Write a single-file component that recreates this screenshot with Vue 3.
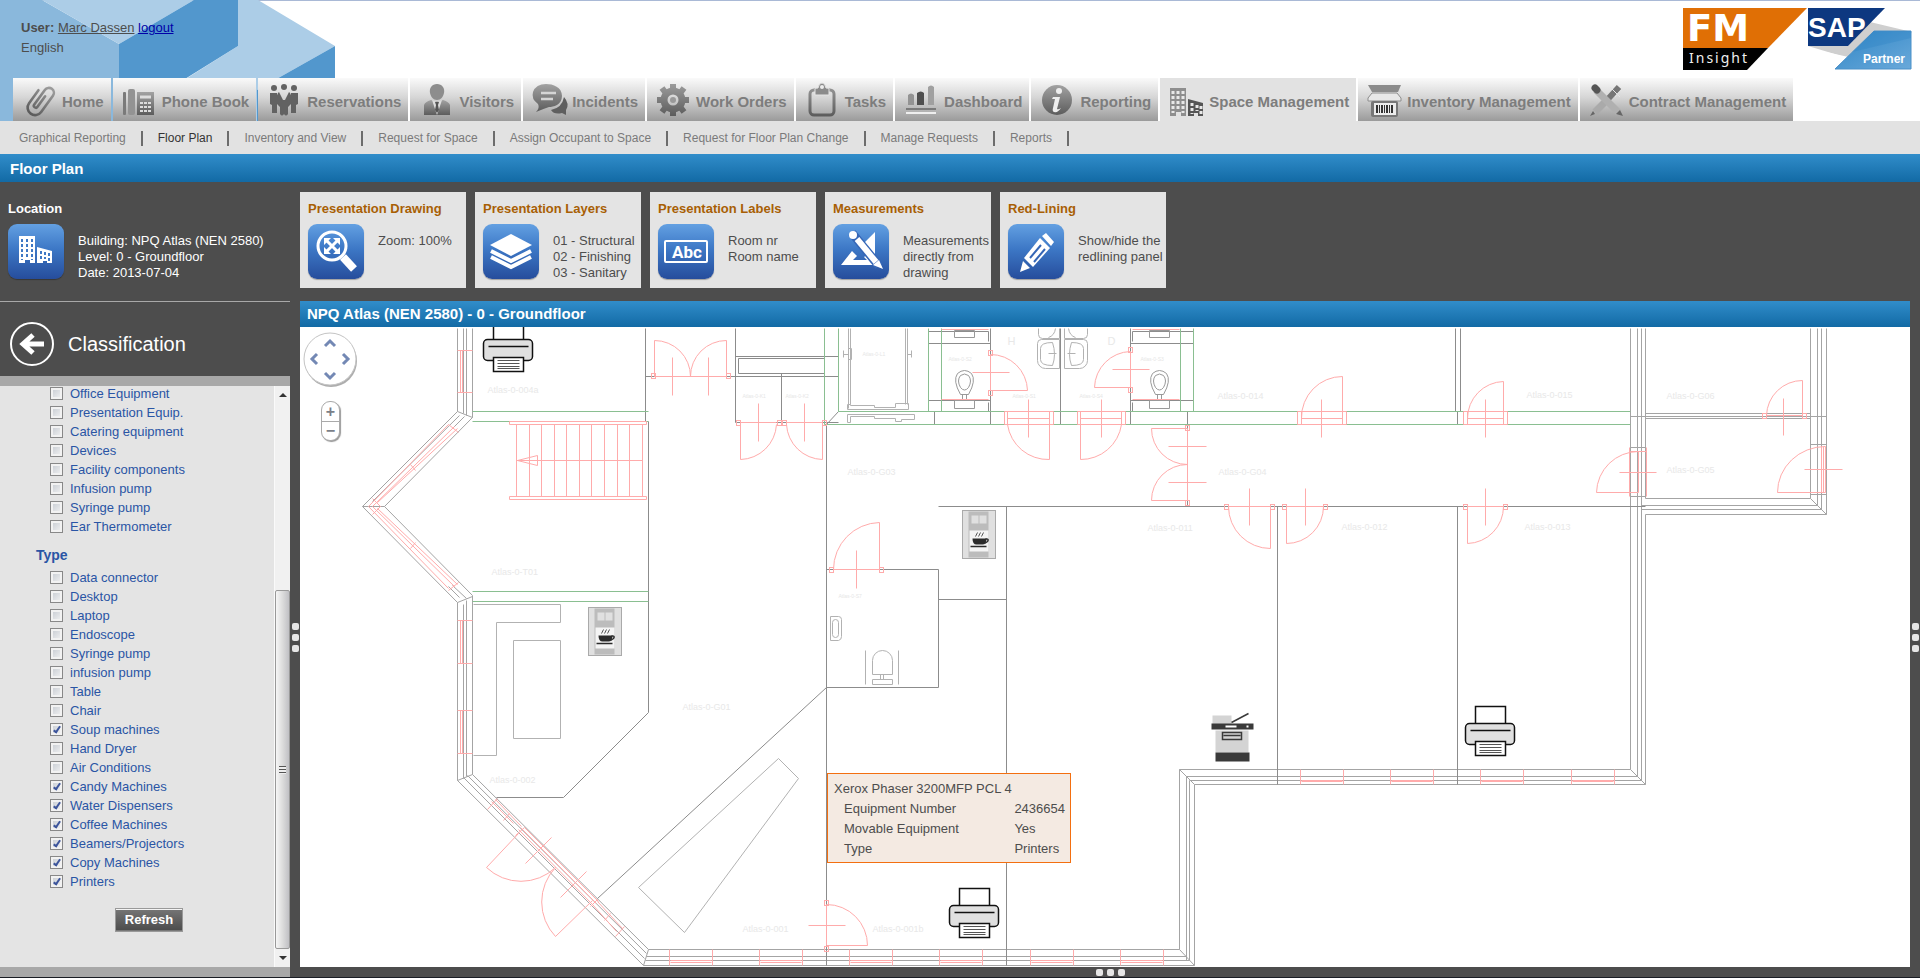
<script setup>
import { ref } from 'vue'

const tabs = [
  { name: 'Home', icon: 'clip' },
  { name: 'Phone Book', icon: 'phone' },
  { name: 'Reservations', icon: 'people' },
  { name: 'Visitors', icon: 'visitor' },
  { name: 'Incidents', icon: 'chat' },
  { name: 'Work Orders', icon: 'gear' },
  { name: 'Tasks', icon: 'board' },
  { name: 'Dashboard', icon: 'bars' },
  { name: 'Reporting', icon: 'info' },
  { name: 'Space Management', icon: 'towers', active: true },
  { name: 'Inventory Management', icon: 'box' },
  { name: 'Contract Management', icon: 'pens' },
]

const subLinks = [
  'Graphical Reporting', 'Floor Plan', 'Inventory and View', 'Request for Space',
  'Assign Occupant to Space', 'Request for Floor Plan Change', 'Manage Requests', 'Reports',
]

const cards = [
  { title: 'Presentation Drawing', icon: 'zoom', lines: ['Zoom: 100%'] },
  { title: 'Presentation Layers', icon: 'layers', lines: ['01 - Structural', '02 - Finishing', '03 - Sanitary'] },
  { title: 'Presentation Labels', icon: 'abc', lines: ['Room nr', 'Room name'] },
  { title: 'Measurements', icon: 'measure', lines: ['Measurements', 'directly from', 'drawing'] },
  { title: 'Red-Lining', icon: 'pencil', lines: ['Show/hide the', 'redlining panel'] },
]

const item = (label, on = false) => ({ label, on })
const groups = ref([
  {
    title: '',
    items: [
      item('Office Equipment'), item('Presentation Equip.'), item('Catering equipment'), item('Devices'),
      item('Facility components'), item('Infusion pump'), item('Syringe pump'), item('Ear Thermometer'),
    ],
  },
  {
    title: 'Type',
    items: [
      item('Data connector'), item('Desktop'), item('Laptop'), item('Endoscope'), item('Syringe pump'),
      item('infusion pump'), item('Table'), item('Chair'), item('Soup machines', true), item('Hand Dryer'),
      item('Air Conditions'), item('Candy Machines', true), item('Water Dispensers', true),
      item('Coffee Machines', true), item('Beamers/Projectors', true), item('Copy Machines', true),
      item('Printers', true),
    ],
  },
])

const details = [
  ['Equipment Number', '2436654'],
  ['Movable Equipment', 'Yes'],
  ['Type', 'Printers'],
]

/* Floor plan geometry, in drawing units of one pixel */
const outerWalls = [
  'M457 328V411L362 506L457 602V780L643 965H1194V784H1645V514H1826V328',
  'M472 328V417L384 506L472 595V774L648 949H1179V769H1630V328',
  'M463 328V413M466 328V415M463 604V778M466 600V776M457 411L472 417M457 602L472 596M457 780L472 774M643 965L648 949',
  'M459 415L372 501M464 416L452 428M459 597L448 586M466 598L452 585M362 506H384',
  'M463 777L644 958M467 775L646 953M646 956H1186M645 960H1189M1186 960V776H1637M1189 960V780H1641',
  'M1179 949L1194 965M1179 769L1194 784M1630 769L1645 784M1637 776V328M1641 780V328',
  'M1645 413H1810M1645 418H1810M1630 416H1826M1645 328V498H1810V328M1817 328V505H1641M1821 328V509H1641M1810 498L1826 514',
  'M1630 447H1645V496H1630M1810 444H1826V494H1810',
]
const innerWalls = [
  'M645 328V421M648 421V712L563 797H496M645 376H838M735 328V422H838M781 373V422M735 356H838M738 373V358H824M738 373H824',
  'M826 424V965M826 569H938V687H826L597 898M938 599H1006M1006 506V965M938 506H1645M1277 506V784M1457 506V784',
  'M1187 411V506M1455 328V411M1460 328V411M1457 411V424M838 411L826 424M934 411V424',
  'M990 328V424M1130 328V424M1060 328V424M928 343H990M928 400H990M928 331H988V341M1132 341V331H1193M1130 343H1193M1130 400H1193M988 402V411M1132 402V411',
]
const lightLines = [
  'M473 604H560V622H496V755H473M513 640H560V738H513ZM778 758L798 778L684 932L638 887Z',
  'M848 328V408M850 328V404M905 328V404M907 328V404M847 404V409H908V403H895V407H874V405H850V404ZM847 414V422H850V416H874V418H895V421H901V419H914V414ZM843 350V357M843 354H848M848 348H851V359H848ZM911 350V357M907 354H911',
  'M865 650V684M898 650V684M872 674V660a10 10 0 0 1 20 0V674ZM872 679H892V684H872ZM880 674V679M883 674V679',
  'M830 616H838a3 3 0 0 1 3 3V636a4 4 0 0 1 -3 4H830ZM832 622a3 3 0 0 1 6 0V634a3 3 0 0 1 -6 0Z',
  'M1059 339H1041a4 4 0 0 0 -4 4V360a8 8 0 0 0 8 8H1059ZM1052 342q4 12 0 23q-12 0 -12 -6V348q0 -6 12 -6M1048 353H1056M1059 328V338H1042a4 4 0 0 1 -4 -4V328M1055 328q-1 7 -7 9',
  'M1064 339H1083a4 4 0 0 1 4 4V360a8 8 0 0 1 -8 8H1064ZM1071 342q-4 12 0 23q12 0 12 -6V348q0 -6 -12 -6M1067 353H1075M1064 328V338H1083a4 4 0 0 0 4 -4V328M1068 328q1 7 7 9',
]
const greenLines = [
  'M472 411H648M472 421H648M472 591H648M472 601H648M838 328V411H1630M824 328V424H1630M928 328V411M941 328V411M1180 328V411M1193 328V411',
]
const stairs = [516, 529, 541, 554, 566, 579, 591, 604, 617, 629, 642]
const redLines = [
  'M457 350H472M457 392H472M460 350V392M462 350V392',
  'M457 620H472M457 663H472M460 620V663M462 620V663M457 710H472M457 753H472M460 710V753M462 710V753',
  'M448 424L458 432M368 506L448 424M372 506L454 426M377 502L457 428M410 464L415 470M368 506L448 588M372 506L454 586M377 508L457 584M410 548L415 542M448 590L458 582M372 498L380 506L372 514',
  'M509 421H646V424H509ZM509 496H646V499H509ZM516 460H642M517 460L537 455V465Z',
  /* paired doors in the entrance corridor */
  'M654 376V340A36 36 0 0 1 690 376A36 36 0 0 1 726 340V376ZM672 357V395M708 357V395',
  'M740 422V459A37 37 0 0 0 776 424M822 422V459A37 37 0 0 1 786 424M740 422H776M786 422H822M758 403V441M804 403V441',
  'M833 569A47 47 0 0 1 879 522V569ZM856 550V588',
  /* washrooms */
  'M990 354A37 37 0 0 1 1027 390H990ZM972 372H1009M1130 351A37 37 0 0 0 1094 387H1130ZM1112 369H1149',
  'M941 329H988M941 399H988M1132 329H1179M1132 399H1179',
  'M1007 424A41 41 0 0 0 1049 459V418H1007ZM1004 411V424H1053V411H1004M1007 411V424M1049 411V424M1028 399V437',
  'M1121 424A41 41 0 0 1 1080 459V418H1121ZM1077 411V424H1125V411H1077M1080 411V424M1121 411V424M1101 399V437',
  'M1301 418A41 41 0 0 1 1342 376V418ZM1297 411V424H1346V411ZM1301 411V424M1342 411V424M1321 399V437',
  'M1467 418A37 37 0 0 1 1503 381V418ZM1463 411V424H1507V411ZM1467 411V424M1503 411V424M1485 399V437',
  'M1766 415A36 36 0 0 1 1802 380V415ZM1783 398V435',
  'M1187 428H1151A36 36 0 0 0 1187 464A36 36 0 0 0 1151 500H1187M1187 428V500M1168 446H1206M1168 482H1206',
  'M1228 506A42 42 0 0 0 1270 548V506ZM1249 488V525M1323 506A37 37 0 0 1 1286 543V506ZM1305 488V525M1503 506A37 37 0 0 1 1467 543V506ZM1485 488V525',
  'M1638 451A42 42 0 0 0 1596 492H1638ZM1629 447V496M1646 447V496M1630 451H1646M1619 472H1656',
  'M1825 446A48 46 0 0 0 1777 492H1825ZM1821 446V492M1823 446V492M1804 469H1842',
  /* south-west facade */
  'M487 809L497 798M491 801L513 823M495 799L521 826M503 820L509 813M515 835L524 827M518 829L593 905M520 827L596 903M524 827L598 901M590 906L597 899M592 904L616 931M597 901L622 928M604 920L610 913M615 936L624 926',
  'M518 833L486 867A50 50 0 0 0 555 867A50 50 0 0 0 555 936L592 900M525 863L551 837M560 897L586 871',
  'M826 904A41 41 0 0 1 867 945H826ZM808 925H845',
]
const redSquares = [
  [651, 373], [726, 373], [736, 420], [777, 420], [782, 420], [822, 420], [829, 567], [879, 567],
  [988, 350], [988, 390], [1128, 347], [1128, 387], [1185, 425], [1185, 500], [1224, 504], [1270, 504],
  [1282, 504], [1323, 504], [1463, 504], [1503, 504], [1762, 413], [1802, 413], [824, 900], [824, 946],
]
const southWindows = [669, 759, 849, 939, 1030, 1120]
const eastWindows = [1300, 1390, 1480, 1571]

const rooms = [
  [487, 392, 'Atlas-0-004a'], [491, 574, 'Atlas-0-T01'], [682, 709, 'Atlas-0-G01'], [489, 782, 'Atlas-0-002'],
  [742, 931, 'Atlas-0-001'], [872, 931, 'Atlas-0-001b'], [847, 474, 'Atlas-0-G03'], [1218, 474, 'Atlas-0-G04'],
  [1217, 398, 'Atlas-0-014'], [1147, 530, 'Atlas-0-011'], [1341, 529, 'Atlas-0-012'], [1524, 529, 'Atlas-0-013'],
  [1526, 397, 'Atlas-0-015'], [1666, 398, 'Atlas-0-G06'], [1666, 472, 'Atlas-0-G05'],
]
const closets = [
  [742, 397, 'Atlas-0-K1'], [785, 397, 'Atlas-0-K2'], [862, 355, 'Atlas-0-L1'], [948, 360, 'Atlas-0-S2'],
  [1140, 360, 'Atlas-0-S3'], [1012, 397, 'Atlas-0-S1'], [1079, 397, 'Atlas-0-S4'], [838, 597, 'Atlas-0-S7'],
]
const printers = [[483, 322], [949, 888], [1465, 706]]
const coffeeMachines = [[588, 607], [962, 510]]
const toilets = [964, 1159]
</script>

<template>
  <div class="page">
    <svg class="defs" width="0" height="0" aria-hidden="true">
      <defs>
        <linearGradient id="steel" x1="0" y1="0" x2="0" y2="1">
          <stop offset="0" stop-color="#a2a2a2" /><stop offset="1" stop-color="#5c5c5c" />
        </linearGradient>
        <linearGradient id="steelBox" gradientUnits="userSpaceOnUse" x1="0" y1="2" x2="0" y2="33">
          <stop offset="0" stop-color="#9a9a9a" /><stop offset="1" stop-color="#5c5c5c" />
        </linearGradient>
        <linearGradient id="partner" x1="0" y1="0" x2="1" y2="1">
          <stop offset="0" stop-color="#2f86c6" /><stop offset="1" stop-color="#6aa9da" />
        </linearGradient>
      </defs>
    </svg>

    <header class="top">
      <svg class="cubes" width="335" height="121" aria-hidden="true">
        <path fill="#8ab8dc" d="M0 0H42L119 44V121H0Z" />
        <path fill="#accde7" d="M42 0H194L119 44ZM238 0H258L335 46L257 90V121H119L238 46Z" />
        <path fill="#5297cd" d="M194 0H238V46L119 120V44ZM335 46V121H257V90Z" />
      </svg>
      <div class="brand">
        <div class="user">
          <div><b>User:</b> <a class="name" href="#">Marc Dassen</a> <a class="logout" href="#">logout</a></div>
          <div>English</div>
        </div>
        <div class="logos">
          <svg width="124" height="62" role="img" aria-label="FM Insight">
            <path fill="#e06f05" d="M0 0H124L85 40H0Z" />
            <path d="M0 40H85L64 62H0Z" />
            <text class="fm" x="4" y="33">FM</text>
            <text class="insight" x="6" y="55">Insight</text>
          </svg>
          <svg width="105" height="62" role="img" aria-label="SAP Partner">
            <path fill="#cfcfcf" d="M62 14L104 24L60 56L0 38L40 38Z" />
            <path fill="#fff" d="M0 40L45 50L26 62H0Z" />
            <path fill="#0d3880" d="M0 0H77L40 38H0Z" />
            <path fill="url(#partner)" stroke="#4a90c8" d="M66 23H103V61H27Z" />
            <path fill="#2c80c2" d="M44 44L103 30V23H66Z" opacity=".3" />
            <text class="sap" x="0" y="29">SAP</text>
            <text class="partner" x="55" y="55">Partner</text>
          </svg>
        </div>
      </div>

      <nav class="tabs">
        <a v-for="t in tabs" :key="t.name" href="#" class="tab" :class="{ active: t.active }">
          <svg width="34" height="34" aria-hidden="true">
            <g v-if="t.icon === 'clip'" fill="none" stroke="url(#steelBox)" stroke-width="2.6" stroke-linecap="round">
              <path transform="rotate(36 17 17)" d="M19 11V24a2 2 0 0 1 -4 0V6a5 5 0 0 1 10 0V26a7 7 0 0 1 -15 0V10" />
            </g>
            <g v-else-if="t.icon === 'phone'">
              <rect x="0" y="9" width="3" height="23" rx="1" fill="#7a7a7a" />
              <rect x="5" y="6" width="7" height="26" rx="2" fill="#939393" />
              <path fill="url(#steel)" d="M14 9H31V32H14Z" />
              <path stroke="#ddd" stroke-width="3" d="M17 14H28" />
              <path stroke="#ddd" stroke-width="2" stroke-dasharray="3 1" d="M17 20H28M17 24H28M17 28H28" />
            </g>
            <g v-else-if="t.icon === 'people'" fill="#626262">
              <circle cx="6" cy="5" r="3" /><circle cx="16" cy="4" r="3" /><circle cx="26" cy="5" r="3" />
              <path d="M2 10H9L12 17V24L9 21V30H4V22L2 21ZM30 10H23L20 17V24L23 21V30H28V22L30 21Z" />
              <path d="M11 9L15 17H17L21 9L22 10V20L20 23V31Q18 34 16 31Q14 34 12 31V23L10 20V10Z" />
            </g>
            <g v-else-if="t.icon === 'visitor'">
              <path fill="#8d8d8d" d="M17 1c5 0 8 4 7 9c-1 4-3 7-7 7s-6-3-7-7c-1-5 2-9 7-9" />
              <path fill="url(#steel)" d="M4 32V22q1-3 7-5q6 3 12 0q6 2 7 5V32Z" />
              <path fill="#ddd" d="M12 17L17 32L22 17L17 19Z" /><path fill="#555" d="M15 19H19L18 22L19 27L17 30L15 27L16 22Z" />
            </g>
            <g v-else-if="t.icon === 'chat'">
              <path fill="#5f5f5f" d="M31 14q6 7 2 13v5l-4-2q-8 2-11-3q11-2 13-13" />
              <path fill="url(#steel)" d="M13 1C20 1 29 4 29 13S20 24 16 24Q10 26 3 29Q7 25 5 21Q-2 16 0 9Q3 1 13 1" />
              <path stroke="#d5d5d5" stroke-width="2.500" d="M8 10H23M8 16H20" />
            </g>
            <g v-else-if="t.icon === 'gear'">
              <circle cx="16" cy="17" r="9" fill="none" stroke="url(#steelBox)" stroke-width="7" />
              <g fill="none" stroke="url(#steelBox)" stroke-width="6">
                <path d="M16 6V1M16 28V33M5 17H0M27 17.010H32M8 9L5 5M24 25L27 29M24 9L27 5M8 25L5 29" />
              </g>
              <circle cx="16" cy="17" r="3" fill="#999" />
            </g>
            <g v-else-if="t.icon === 'board'">
              <rect x="4" y="7" width="24" height="25" rx="4" fill="none" stroke="url(#steelBox)" stroke-width="3" />
              <path fill="#8b8b8b" stroke="#e4e4e4" d="M9 12V6Q9 5 12 5Q13 0 16 0Q19 0 20 5Q23 5 23 6V12Z" /><circle cx="16" cy="4" r="2" fill="#eee" />
            </g>
            <g v-else-if="t.icon === 'bars'">
              <path fill="#939393" d="M3 22V12q3-3 6 0V22Z" /><path fill="#4f4f4f" d="M12 22V10q4-3 7 0V22Z" />
              <path fill="#a0a0a0" d="M23 22V4q3-3 6 0V22Z" />
              <path stroke="#666" stroke-width="1.500" d="M1 26H31" /><path stroke="#eee" stroke-width="2" d="M1 30H31" />
            </g>
            <g v-else-if="t.icon === 'info'">
              <circle cx="16" cy="17" r="15" fill="url(#steel)" />
              <circle cx="18" cy="8" r="3" fill="#eee" />
              <path fill="#eee" d="M12 14H19L16 26Q17 27 20 25Q17 30 13 29Q11 28 12 25L14 16H11Z" />
            </g>
            <g v-else-if="t.icon === 'towers'">
              <path fill="#8e8e8e" d="M0 5H16V33H11V29H6V33H0Z" /><path fill="#555" d="M18 16L33 20V33H28V30H24V33H18Z" />
              <path stroke="#e8e8e8" stroke-width="3" stroke-dasharray="3 2" d="M3 8V30M8 8V27M13 8V30M22 20V31M27 22V28M31 23V31" />
            </g>
            <g v-else-if="t.icon === 'box'">
              <path fill="#8b8b8b" d="M0 2H33L30 9H4Z" /><path fill="#e8e8e8" stroke="#8d8d8d" d="M4 10H29L33 15V18H0V15Z" />
              <rect x="3" y="18" width="27" height="16" rx="2" fill="#777" /><rect x="6" y="20" width="22" height="12" fill="#ececec" />
              <path stroke="#333" stroke-width="8" stroke-dasharray="2 1 1 1" d="M8 26H26" />
            </g>
            <g v-else>
              <path stroke="#767676" stroke-width="6" d="M29 4L18 16" /><path stroke="#e4e4e4" stroke-width="1" d="M20 4L30 14M32 6L25 14" />
              <path stroke="#aaa" stroke-width="7" d="M16 18L5 29" /><path fill="#666" d="M0 33L3 28L5 31Z" />
              <path stroke="#b0b0b0" stroke-width="7" d="M6 7L29 30" /><path stroke="#555" stroke-width="7" stroke-linecap="round" d="M5 5L7 7" />
              <path fill="#666" d="M33 33L26 31L30 27Z" />
            </g>
          </svg>
          <span>{{ t.name }}</span>
        </a>
      </nav>
    </header>

    <nav class="subnav">
      <a v-for="s in subLinks" :key="s" href="#" :class="{ current: s === 'Floor Plan' }">{{ s }}</a>
    </nav>

    <h1 class="bar">Floor Plan</h1>

    <div class="body">
      <aside class="side">
        <section class="location">
          <h2>Location</h2>
          <div class="row">
            <span class="tile">
              <svg width="56" height="55" aria-hidden="true">
                <path fill="#fff" d="M11 12H27V39H22V36H17V39H11ZM29 23L44 27V39H39V37H35V39H29Z" />
                <path stroke="#3f78c4" stroke-width="2" stroke-dasharray="3 2" d="M14 15V36M19 15V34M24 15V36M33 27V37M37 28V35M41 29V37" />
              </svg>
            </span>
            <div class="text">Building: NPQ Atlas (NEN 2580)<br>Level: 0 - Groundfloor<br>Date: 2013-07-04</div>
          </div>
        </section>
        <div class="heading">
          <button class="back" aria-label="Back">
            <svg width="46" height="46" aria-hidden="true">
              <circle cx="23" cy="23" r="21" fill="none" stroke="#fff" stroke-width="2" />
              <path fill="none" stroke="#fff" stroke-width="5" d="M35 23H15M24 14L14 23L24 32" />
            </svg>
          </button>
          <h2>Classification</h2>
        </div>
        <div class="panel">
          <form class="filters" @submit.prevent>
            <fieldset v-for="(g, gi) in groups" :key="gi">
              <legend v-if="g.title">{{ g.title }}</legend>
              <label v-for="(i, n) in g.items" :key="n"><input v-model="i.on" type="checkbox">{{ i.label }}</label>
            </fieldset>
            <button class="refresh">Refresh</button>
          </form>
          <div class="scroll" aria-hidden="true">
            <i class="up" /><i class="thumb" /><i class="down" />
          </div>
        </div>
      </aside>

      <div class="splitter"><i /><i /><i /></div>

      <main class="main">
        <div class="cards">
          <section v-for="c in cards" :key="c.title" class="card">
            <h2>{{ c.title }}</h2>
            <div class="row">
              <span class="tile">
                <svg width="56" height="55" aria-hidden="true">
                  <g v-if="c.icon === 'zoom'" fill="none" stroke="#fff">
                    <circle cx="24" cy="22" r="14" stroke-width="3" />
                    <path stroke-width="8" d="M35 33L46 45" />
                    <path stroke-width="3" d="M18 16L30 28M30 16L18 28" />
                    <path fill="#fff" stroke="none" d="M16 14H23L16 21ZM32 14V21L25 14ZM16 30V23L23 30ZM32 30H25L32 23Z" />
                  </g>
                  <g v-else-if="c.icon === 'layers'">
                    <path fill="#fff" d="M28 10L49 21L28 32L7 21Z" />
                    <path fill="none" stroke="#fff" stroke-width="4" d="M8 27L28 37L48 27M8 33L28 43L48 33" />
                  </g>
                  <g v-else-if="c.icon === 'abc'">
                    <rect x="7" y="17" width="42" height="21" rx="1" fill="none" stroke="#fff" stroke-width="2" />
                    <text class="abc" x="14" y="34">Abc</text>
                  </g>
                  <g v-else-if="c.icon === 'measure'">
                    <path fill="#fff" fill-rule="evenodd" d="M42 8V41H8L19 27L24 32L20 36H34L31 33L38 28L30 20Z" />
                    <path stroke="#3566b6" stroke-width="9" d="M19 9L46 42" />
                    <path stroke="#fff" stroke-width="6" d="M24 15L43 38" /><circle cx="20" cy="11" r="4" fill="#fff" />
                    <path fill="#fff" d="M50 45L40 41L46 36Z" />
                  </g>
                  <g v-else>
                    <path fill="#fff" d="M12 48L15 37L22 44ZM34 12L38 9L46 18L43 22Z" />
                    <path fill="#fff" d="M16 34L32 14L42 24L25 43Z" />
                    <path stroke="#3566b6" stroke-width="2" d="M22 34L33 21M26 38L37 25" />
                  </g>
                </svg>
              </span>
              <div class="text"><template v-for="l in c.lines" :key="l">{{ l }}<br></template></div>
            </div>
          </section>
        </div>

        <h2 class="bar plan-title">NPQ Atlas (NEN 2580) - 0 - Groundfloor</h2>

        <div class="map">
          <svg class="plan" width="100%" height="100%" role="img" aria-label="Groundfloor plan">
            <g transform="translate(-299.5 -326.5)" fill="none">
              <g class="room">
                <text v-for="r in rooms" :key="r[0] + '-' + r[1]" :x="r[0]" :y="r[1]">{{ r[2] }}</text>
                <text class="wc" x="1007" y="344">H</text><text class="wc" x="1107" y="344">D</text>
              </g>
              <g class="closet">
                <text v-for="r in closets" :key="r[2]" :x="r[0]" :y="r[1]">{{ r[2] }}</text>
              </g>
              <g stroke="#a4a4a4"><path v-for="d in outerWalls" :key="d" :d="d" /></g>
              <g stroke="#b2b2b2"><path v-for="d in lightLines" :key="d" :d="d" /></g>
              <g stroke="#8c8c8c"><path v-for="d in innerWalls" :key="d" :d="d" /></g>
              <g stroke="#8abf91"><path v-for="d in greenLines" :key="d" :d="d" /></g>
              <g stroke="#999">
                <g v-for="x in toilets" :key="x" :transform="`translate(${x} 370)`">
                  <path d="M-4 24Q-12 10 -7 3Q0 -3 7 3Q12 10 4 24ZM-4 17Q-8 10 -4 5Q0 2 4 5Q8 10 4 17Q0 22 -4 17ZM-2 24V30M2 24V30M-10 30H10V38H-10ZM-10 -40H10V-33H-10Z" />
                </g>
              </g>
              <g stroke="#ffabab">
                <path v-for="d in redLines" :key="d" :d="d" />
                <path v-for="x in stairs" :key="x" :d="`M${x} 424V496`" />
                <rect v-for="q in redSquares" :key="q[0] + '-' + q[1]" :x="q[0]" :y="q[1]" width="4" height="5" />
                <path v-for="x in southWindows" :key="x" :d="`M${x} 949V965M${x + 43} 949V965M${x + 1} 960H${x + 42}M${x + 1} 962H${x + 42}`" />
                <path v-for="x in eastWindows" :key="x" :d="`M${x} 769V784M${x + 43} 769V784M${x + 1} 780H${x + 42}M${x + 1} 781H${x + 42}`" />
              </g>

              <g v-for="p in printers" :key="p[0]" :transform="`translate(${p[0]} ${p[1]})`" stroke="#111" stroke-width="1.500">
                <path fill="#fff" d="M10 0H40V20H10Z" />
                <rect x="0" y="17" width="49" height="21" rx="4" fill="#e0e0e0" />
                <path d="M5 24H45" />
                <path fill="#fff" d="M10 35H40V49H10Z" />
                <path stroke="#555" d="M14 38H36M14 41H36M14 44H36M14 46H36" stroke-width="1" />
              </g>

              <g v-for="p in coffeeMachines" :key="p[0]" :transform="`translate(${p[0]} ${p[1]})`">
                <rect width="33" height="48" fill="#e0e0e0" stroke="#aaa" />
                <path fill="#bcbcbc" d="M6 1H26V47H6Z" />
                <path fill="#f4f4f4" d="M7 20H26V41H7Z" />
                <path stroke="#e0e0e0" stroke-width="8" stroke-dasharray="7 1" d="M9 9H24" />
                <path stroke="#555" d="M15 22L13 26M18 22L16 26M21 22L19 26" />
                <path fill="#2b2b2b" d="M10 28H24Q24 34 20 34H14Q10 34 10 28" />
                <path stroke="#2b2b2b" stroke-width="1.500" d="M23 28.500Q27 28 25 31L22 33M8 36H24" />
              </g>

              <g transform="translate(1211 712)">
                <path fill="#d4d4d4" d="M1 3H20V12H1ZM4 18H37V40H4Z" />
                <path fill="#3a3a3a" d="M0 11H42V17H0ZM4 40H38V49H4Z" />
                <path stroke="#3a3a3a" stroke-width="1.500" d="M20 10L37 1" />
                <path stroke="#fff" stroke-width="2" d="M14 14H25M35 14H37" />
                <path stroke="#3a3a3a" stroke-width="1.500" d="M11 20H30V27H11ZM12 23H29" />
              </g>
            </g>
          </svg>

          <div class="pan">
            <svg width="56" height="58" role="img" aria-label="Pan">
              <circle cx="28" cy="30" r="26" fill="#999" opacity=".8" />
              <circle cx="27" cy="28" r="26" fill="#fff" stroke="#c4c4c4" />
              <path fill="none" stroke="#7388b4" stroke-width="3" d="M22 15L27 10L32 15M22 42L27 47L32 42M14 23L9 28L14 33M40 23L45 28L40 33" />
            </svg>
          </div>
          <div class="zoom">
            <button aria-label="Zoom in">+</button>
            <button aria-label="Zoom out">−</button>
          </div>
          <table class="tip">
            <thead><tr><th colspan="2">Xerox Phaser 3200MFP PCL 4</th></tr></thead>
            <tbody><tr v-for="d in details" :key="d[0]"><td>{{ d[0] }}</td><td>{{ d[1] }}</td></tr></tbody>
          </table>
        </div>
      </main>

      <div class="splitter right"><i /><i /><i /></div>
    </div>

    <footer class="foot"><div class="dots"><i /><i /><i /></div></footer>
  </div>
</template>

<style>
body { margin: 0; background: #4d4d4d; }
</style>

<style scoped>
* { box-sizing: border-box; }
.page { display: flex; flex-direction: column; min-height: 100vh; font: 13px/16px "Liberation Sans", Arial, sans-serif; color: #4d4d4d; background: #4d4d4d; }
h1, h2 { margin: 0; font-size: 13px; }
a { color: inherit; text-decoration: none; }
button { font-family: inherit; padding: 0; border: 0; background: none; }
svg { display: block; }
.defs { position: absolute; }

.top { position: relative; background: #fff; border-top: 1px solid #a9b9d6; }
.cubes { position: absolute; left: 0; bottom: 0; }
.brand { position: relative; display: flex; justify-content: space-between; height: 77px; padding: 7px 7px 0 21px; }
.user { line-height: 20px; padding-top: 10px; }
.user a { text-decoration: underline; }
.user .logout { color: #0000a8; }
.logos { display: flex; gap: 1px; }
.logos svg { overflow: visible; }
.fm { font: bold 37px "DejaVu Sans", sans-serif; fill: #fff; }
.insight { font: 14px "Noto Sans", sans-serif; fill: #eee; letter-spacing: 2px; }
.sap { font: bold 28px "Liberation Sans", sans-serif; fill: #fff; }
.partner { font: bold 12px "Liberation Sans", sans-serif; fill: #fff; }

.tabs { position: relative; display: flex; gap: 2px; padding-left: 13px; height: 43px; }
.tab { display: flex; align-items: center; gap: 5px; padding: 0 7px 0 10px; font-size: 15px; font-weight: bold; white-space: nowrap; color: #7d7d7d; background: linear-gradient(#fafafa, #d6d6d6 45%, #9a9a9a); }
.tab svg { flex: none; overflow: visible; }
.tab span { padding-top: 5px; }
.tab.active { background: #e2e2e2; }

.subnav { display: flex; align-items: center; height: 33px; padding: 1px 0 0 4px; background: #e2e2e2; font-size: 12px; color: #7a7a7a; }
.subnav a { padding: 0 15px; border-right: 2px solid #6c6c6c; line-height: 15px; }
.subnav .current { color: #333; }

.bar { height: 28px; padding-left: 10px; font-size: 15px; line-height: 29px; color: #fff; background: linear-gradient(#318dca, #126aa5); }

.body { flex: 1; display: flex; }
.side { width: 290px; flex: none; display: flex; flex-direction: column; color: #fff; }
.location { height: 120px; padding: 19px 8px 0; border-bottom: 1px solid #a8a8a8; }
.row { display: flex; gap: 14px; margin-top: 7px; }
.tile { flex: none; width: 56px; height: 55px; border-radius: 9px; background: linear-gradient(#63a0e2, #3d78c6 45%, #264d9c); box-shadow: 0 1px 1px rgba(0, 0, 0, .3); }
.text { padding-top: 9px; white-space: nowrap; }
.heading { display: flex; align-items: center; gap: 13px; height: 84px; padding: 10px 0 0 9px; border-bottom: 10px solid #a8a8a8; }
.heading h2 { font-size: 20px; font-weight: normal; line-height: 24px; }
.panel { flex: 1; display: flex; background: #e4e4e4; color: #2a55a5; }
.filters { flex: 1; padding-left: 36px; }
fieldset { margin: 0; padding: 0 0 0 14px; border: 0; min-width: 0; }
legend { float: left; width: 100%; margin-left: -14px; padding: 9px 0 3px; height: 32px; font-size: 14px; font-weight: bold; line-height: 20px; }
label { display: flex; align-items: center; gap: 7px; clear: both; height: 19px; }
fieldset:first-child { margin-top: -2px; }
input { appearance: none; flex: none; width: 13px; height: 13px; margin: 0; border: 1px solid #888; background: linear-gradient(135deg, #c4c9d0, #f4f4f4); box-shadow: inset 0 0 0 2px #f2f2f2; position: relative; }
input:checked::after { content: ""; box-sizing: border-box; position: absolute; left: 4px; top: 1px; width: 4px; height: 8px; border: solid #3d559c; border-width: 0 2px 2px 0; transform: rotate(35deg); }
.refresh { display: block; width: 68px; height: 24px; margin: 17px 0 0 79px; font-size: 13px; font-weight: bold; line-height: 18px; color: #fff; background: linear-gradient(#747474, #4d4d4d); border: 1px solid #eee; border-right-color: #777; outline: 1px solid #999; outline-offset: -1px; border-top: 2px solid #f4f4f4; border-bottom: 2px solid #777; }
.scroll { width: 16px; display: flex; flex-direction: column; background: #f1f1f1; border-left: 1px solid #fafafa; }
.up, .down { width: 0; height: 0; margin: 7px auto; border: 4px solid transparent; }
.up { border-bottom-color: #333; border-top: 0; }
.down { border-top-color: #333; border-bottom: 0; }
.thumb { flex: none; height: 359px; margin-top: auto; border: 1px solid #999; border-radius: 2px; background: repeating-linear-gradient(#555 0 1px, #eee 1px 3px) center / 7px 8px no-repeat, linear-gradient(90deg, #f6f6f6, #dcdcdc 50%, #c0c0c4); }

.splitter { width: 10px; flex: none; display: flex; flex-direction: column; gap: 4px; align-items: center; padding-top: 441px; }
.splitter i, .dots i { width: 7px; height: 7px; border-radius: 2px; background: #e6e6e6; }

.main { flex: 1; min-width: 0; display: flex; flex-direction: column; }
.cards { display: flex; gap: 9px; padding: 10px 0 13px; }
.card { width: 166px; height: 96px; padding: 9px 0 0 8px; background: #e4e4e4; }
.card h2, .location h2 { line-height: 16px; }
.card h2 { color: #a85f05; }
.abc { font: bold 17px Roboto, sans-serif; fill: #fff; }
.plan-title { height: 26px; line-height: 26px; padding-left: 7px; }
.map { flex: 1; position: relative; background: #fff; overflow: hidden; min-height: 640px; }
.plan { position: absolute; left: 0; top: 0; }
.room text { font: 9px "Liberation Sans", sans-serif; fill: #e8e8e8; }
.room .wc { font-size: 11px; }
.closet text { font: 5px "Liberation Sans", sans-serif; fill: #e6e6e6; }
.pan { position: absolute; left: 3px; top: 4px; }
.zoom { position: absolute; left: 21px; top: 74px; width: 19px; border: 1px solid #aaa; border-radius: 9px; background: #fff; box-shadow: 1px 1px 1px #999; }
.zoom button { display: block; width: 100%; height: 19px; font-size: 16px; font-weight: bold; line-height: 18px; color: #7b7f88; }
.zoom button + button { border-top: 1px solid #aaa; }
.tip { position: absolute; left: 527px; top: 446px; width: 244px; height: 90px; padding: 5px 5px 3px 6px; border: 1px solid #f36f10; border-spacing: 0; background: #f4eae2; color: #4d4d4d; }
.tip th, .tip td { padding: 0; height: 20px; text-align: left; font-weight: normal; }
.tip td:first-child { padding-left: 10px; width: 181px; }

.foot { display: flex; height: 11px; border-bottom: 1px solid #1a1d24; }
.foot::before { content: ""; width: 290px; background: #a8a8a8; }
.dots { flex: 1; display: flex; gap: 4px; align-items: center; justify-content: center; padding-left: 10px; }
</style>
